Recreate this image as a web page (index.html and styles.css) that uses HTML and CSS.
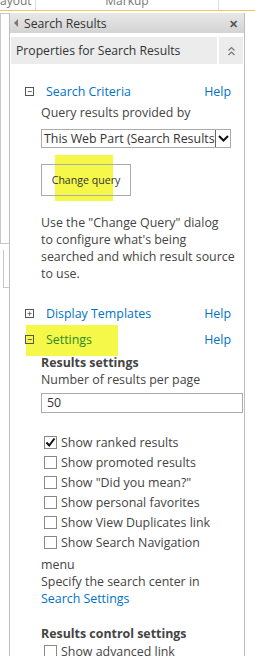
FILE: index.html
```html
<!DOCTYPE html>
<html lang="en">
<head>
    <meta charset="UTF-8">
    <title>Search Results</title>
    <link rel="stylesheet" href="styles.css">
</head>
<body>

<div class="topbar">
    <div class="tab tab-layout">ayout</div>
    <div class="tab tab-markup">Markup</div>
    <div class="tab tab-rest"></div>
</div>

<div class="main">
    <div class="leftstrip">
        <div class="leftline first"></div>
        <div class="leftline second"></div>
    </div>

    <div class="panel">
        <div class="titlebar">
            <span class="arrow"></span>
            <span class="title">Search Results</span>
            <span class="close">&#x2715;</span>
        </div>

        <div class="propbar">
            <span class="proptitle">Properties for Search Results</span>
            <span class="collapse">
                <svg width="9" height="10" viewBox="0 0 9 10">
                    <path d="M1.5 4.5 L4.5 1.5 L7.5 4.5 M1.5 9 L4.5 6 L7.5 9" fill="none" stroke="#777" stroke-width="1.2"/>
                </svg>
            </span>
        </div>

        <div class="section first">
            <div class="section-head">
                <span class="toggle">&minus;</span>
                <span class="section-title">Search Criteria</span>
                <a class="help">Help</a>
            </div>
            <div class="section-body">
                <div class="label">Query results provided by</div>
                <div class="select">
                    <span class="select-text">This Web Part (Search Results)</span>
                    <span class="select-arrow">
                        <svg width="11" height="7" viewBox="0 0 11 7">
                            <path d="M1 1 L5.5 5.5 L10 1" fill="none" stroke="#111" stroke-width="2"/>
                        </svg>
                    </span>
                </div>
                <div class="button-row">
                    <span class="highlight hl-button"></span>
                    <button class="change-query">Change query</button>
                </div>
                <p class="note">Use the "Change Query" dialog<br>to configure what's being<br>searched and which result source<br>to use.</p>
            </div>
        </div>

        <div class="section">
            <div class="section-head">
                <span class="toggle">+</span>
                <span class="section-title">Display Templates</span>
                <a class="help">Help</a>
            </div>
        </div>

        <div class="section">
            <div class="section-head">
                <span class="highlight hl-settings"></span>
                <span class="toggle">&minus;</span>
                <span class="section-title green">Settings</span>
                <a class="help">Help</a>
            </div>
            <div class="section-body">
                <div class="subhead">Results settings</div>
                <div class="label">Number of results per page</div>
                <div class="textbox">50</div>

                <div class="checks">
                    <label class="check"><span class="box checked">
                        <svg width="11" height="11" viewBox="0 0 11 11"><path d="M1.5 5.5 L4.2 8.5 L9.5 1.5" fill="none" stroke="#111" stroke-width="2"/></svg>
                    </span>Show ranked results</label>
                    <label class="check"><span class="box"></span>Show promoted results</label>
                    <label class="check"><span class="box"></span>Show "Did you mean?"</label>
                    <label class="check"><span class="box"></span>Show personal favorites</label>
                    <label class="check"><span class="box"></span>Show View Duplicates link</label>
                    <label class="check"><span class="box"></span>Show Search Navigation</label>
                </div>
                <div class="label after-checks">menu</div>
                <div class="label">Specify the search center in</div>
                <a class="link">Search Settings</a>

                <div class="subhead second">Results control settings</div>
                <label class="check last"><span class="box"></span>Show advanced link</label>
            </div>
        </div>
    </div>
</div>

</body>
</html>
```

FILE: styles.css
```css
body {
    margin: 0;
    font-family: "Open Sans", "Noto Sans", sans-serif;
    font-size: 12.4px;
    color: #444;
    background: #fff;
    overflow: hidden;
}
.topbar {
    display: flex;
    height: 10px;
    border-bottom: 1px solid #f3c070;
    overflow: hidden;
}
.tab {
    font-size: 12px;
    line-height: 12px;
    margin-top: -5px;
    color: #777;
    border-right: 1px solid #ddd;
}
.tab-layout {
    width: 35px;
}
.tab-markup {
    width: 182px;
    text-align: center;
}
.tab-rest {
    flex: 1;
    border-right: none;
}
.main {
    display: flex;
    padding-top: 2px;
}
.leftstrip {
    width: 9px;
}
.leftline {
    margin-left: 3px;
    border-left: 1px solid #c8c8c8;
    border-bottom: 1px solid #c8c8c8;
}
.leftline.first {
    height: 229px;
    margin-left: 0;
    border-left: none;
    border-top: 1px solid #c8c8c8;
    box-shadow: inset 4px 0 0 -3px #c8c8c8;
}
.leftline.second {
    height: 37px;
    margin-top: 6px;
}
.panel {
    width: 234px;
    border-left: 1px solid #bdbdbd;
    border-right: 1px solid #bdbdbd;
    height: 700px;
}
.titlebar {
    display: flex;
    align-items: center;
    height: 20px;
    background: linear-gradient(#e8e8e8, #d3d3d3);
    color: #333;
}
.arrow {
    width: 0;
    height: 0;
    margin-left: 4px;
    margin-right: 6px;
    border-top: 4px solid transparent;
    border-bottom: 4px solid transparent;
    border-right: 4px solid #777;
}
.title {
    flex: 1;
    font-size: 12.2px;
}
.close {
    font-size: 11px;
    font-weight: bold;
    color: #555;
    margin-right: 6px;
}
.propbar {
    display: flex;
    margin: 4px 1px 0 1px;
    height: 27px;
    background: #ececec;
}
.proptitle {
    flex: 1;
    display: flex;
    align-items: center;
    padding-left: 5px;
    font-size: 12.2px;
    color: #333;
    border-right: 2px solid #fff;
}
.collapse {
    width: 24px;
    display: flex;
    align-items: center;
    justify-content: center;
}
.section {
    padding: 0 13px 0 15px;
}
.section.first {
    padding-bottom: 18px;
}
.section-head {
    position: relative;
    display: flex;
    align-items: center;
    height: 26px;
}
.section.first .section-head {
    margin-top: 14px;
}
.toggle {
    position: relative;
    width: 7px;
    height: 7px;
    border: 1px solid #555;
    font-size: 9px;
    line-height: 7px;
    text-align: center;
    color: #222;
    margin-right: 12px;
}
.section-title {
    position: relative;
    flex: 1;
    color: #0072c6;
}
.section-title.green {
    color: #2a8a2a;
}
.help {
    color: #0072c6;
}
.highlight {
    position: absolute;
    background: #f4f734;
    opacity: 0.9;
}
.hl-button {
    left: 14px;
    top: -9px;
    width: 58px;
    height: 46px;
}
.hl-settings {
    left: 1px;
    top: -1px;
    width: 92px;
    height: 31px;
}
.section-body {
    padding-left: 16px;
}
.label {
    line-height: 17px;
}
.select {
    display: flex;
    height: 17px;
    margin-top: 8px;
    border: 1px solid #ababab;
    overflow: hidden;
}
.select-text {
    flex: 1;
    white-space: nowrap;
    overflow: hidden;
    line-height: 17px;
    padding-left: 2px;
    color: #333;
}
.select-arrow {
    width: 14px;
    display: flex;
    align-items: center;
    justify-content: center;
    border: 1px solid #666;
    margin: -1px -1px -1px 0;
}
.button-row {
    position: relative;
    margin-top: 16px;
}
.change-query {
    position: relative;
    display: block;
    font-family: inherit;
    font-size: 10.6px;
    color: #333;
    background: transparent;
    border: 1px solid #ababab;
    width: 90px;
    height: 32px;
    padding: 0;
}
.note {
    margin: 18px -10px 0 0;
    line-height: 17px;
    white-space: nowrap;
}
.subhead {
    font-weight: bold;
    line-height: 17px;
    margin-top: 2px;
}
.subhead.second {
    margin-top: 18px;
}
.textbox {
    height: 18px;
    line-height: 18px;
    padding-left: 5px;
    margin-top: 5px;
    margin-right: -12px;
    border: 1px solid #ababab;
    color: #333;
}
.checks {
    margin-top: 19px;
}
.check {
    display: flex;
    align-items: center;
    height: 20px;
    margin-left: 3px;
}
.check.last {
    margin-top: -1px;
}
.box {
    display: flex;
    align-items: center;
    justify-content: center;
    width: 11px;
    height: 11px;
    border: 1px solid #888;
    margin-right: 4px;
}
.after-checks {
    margin-top: 4px;
}
.link {
    display: block;
    color: #0072c6;
    line-height: 17px;
}
```
